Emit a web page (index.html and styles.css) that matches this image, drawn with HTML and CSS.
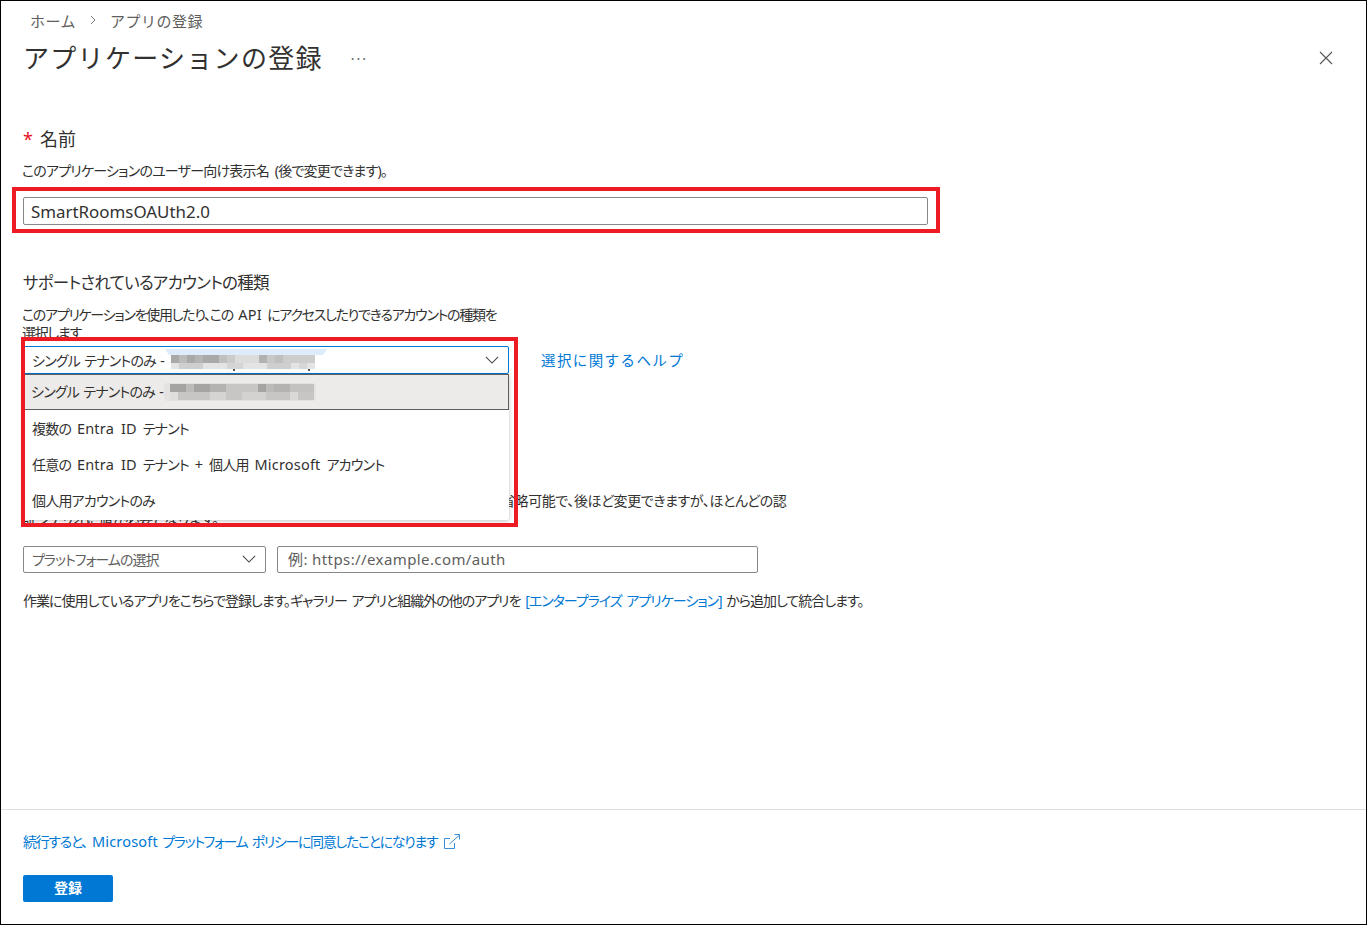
FILE: index.html
```html
<!DOCTYPE html>
<html lang="ja">
<head>
<meta charset="utf-8">
<title>アプリケーションの登録</title>
<link rel="stylesheet" href="styles.css">
</head>
<body>
<div class="page">
  <main class="main">
    <nav class="crumbs"><span>ホーム</span><svg class="crumb-sep" width="6" height="10" viewBox="0 0 6 10"><path d="M1 1l4 4-4 4" fill="none" stroke="#777" stroke-width="1"/></svg><span>アプリの登録</span></nav>
    <header class="head">
      <h1 class="title">アプリケーションの登録</h1>
      <span class="more">···</span>
      <svg class="close" width="14" height="14" viewBox="0 0 14 14"><path d="M1 1l12 12M13 1L1 13" fill="none" stroke="#555" stroke-width="1.1"/></svg>
    </header>
    <section class="name-sec">
      <h2 class="label"><span class="req">*</span>名前</h2>
      <p class="desc desc-shift">このアプリケーションのユーザー向け表示名 (後で変更できます)。</p>
      <div class="name-input">SmartRoomsOAUth2.0</div>
    </section>
    <section class="acct-sec">
      <h2 class="label2">サポートされているアカウントの種類</h2>
      <p class="desc desc-shift narrow">このアプリケーションを使用したり、この <span class="lat">API</span> にアクセスしたりできるアカウントの種類を選択します</p>
      <div class="acct-row">
        <div class="select focus"><span>シングル テナントのみ -</span>
          <svg class="chev" width="14" height="8" viewBox="0 0 16 9"><path d="M1 1l7 7 7-7" fill="none" stroke="#444" stroke-width="1.2"/></svg>
        </div>
        <a class="link help">選択に関するヘルプ</a>
      </div>
    </section>
    <section class="redir-sec">
      <p class="desc redir-text">ユーザー認証が成功すると、この <span class="lat">URI</span> に認証応答を返します。この時点での指定は省略可能で、後ほど変更できますが、ほとんどの認証シナリオに値が必要となります。</p>
      <div class="redir-row">
        <div class="select plat"><span>プラットフォームの選択</span>
          <svg class="chev" width="14" height="8" viewBox="0 0 16 9"><path d="M1 1l7 7 7-7" fill="none" stroke="#444" stroke-width="1.2"/></svg>
        </div>
        <div class="uri">例: https://example.com/auth</div>
      </div>
      <p class="desc note">作業に使用しているアプリをこちらで登録します。ギャラリー アプリと組織外の他のアプリを <a class="link">[エンタープライズ アプリケーション]</a> から追加して統合します。</p>
    </section>
  </main>
  <footer class="foot">
    <p class="policy"><a class="link">続行すると、<span class="lat policy-ms">Microsoft</span> プラットフォーム ポリシーに同意したことになります</a>
      <svg class="ext" width="16" height="15" viewBox="0 0 16 15"><path d="M6 4.500H.5v10h10V9M5.500 10l10-9M10.500.500h5v5" fill="none" stroke="#3a8fd8" stroke-width="1"/></svg></p>
    <button class="btn">登録</button>
  </footer>

  <svg class="blur blur-top" width="162" height="24" viewBox="0 0 162 24">
    <path d="M0 0H162L158 6H4Z" fill="#dcecfa"/>
    <rect x="6" y="6" width="144" height="8" fill="#a9a9a9"/>
    <rect x="14" y="6" width="8" height="8" fill="#bcbcbc"/><rect x="30" y="6" width="8" height="8" fill="#b4b4b4"/>
    <rect x="54" y="6" width="8" height="8" fill="#c0c0c0"/><rect x="62" y="6" width="8" height="8" fill="#cbcbcb"/>
    <rect x="70" y="6" width="24" height="8" fill="#dcdcdc"/><rect x="94" y="6" width="8" height="8" fill="#b2b2b2"/>
    <rect x="102" y="6" width="8" height="8" fill="#c8c8c8"/><rect x="110" y="6" width="8" height="8" fill="#bfbfbf"/>
    <rect x="118" y="6" width="32" height="8" fill="#cdcdcd"/>
    <rect x="6" y="14" width="144" height="6" fill="#e4e4e4"/>
    <rect x="14" y="14" width="24" height="6" fill="#cfcfcf"/><rect x="62" y="14" width="16" height="6" fill="#d5d5d5"/>
    <rect x="102" y="14" width="24" height="6" fill="#cfcfcf"/><rect x="134" y="14" width="8" height="6" fill="#d6d6d6"/>
    <rect x="68" y="20" width="2" height="2" fill="#555"/><rect x="143" y="20" width="2" height="2" fill="#555"/>
  </svg>

  <div class="menu">
    <div class="opt sel"><span>シングル テナントのみ -</span>
      <svg class="blur-sel" width="152" height="18" viewBox="0 0 152 18">
        <rect x="0" y="0" width="152" height="18" rx="4" fill="#e4e2e0"/>
        <rect x="6" y="1" width="144" height="8" fill="#a6a4a3"/>
        <rect x="22" y="1" width="8" height="8" fill="#bdbbb9"/><rect x="46" y="1" width="24" height="8" fill="#b5b3b2"/>
        <rect x="62" y="1" width="32" height="8" fill="#c8c6c4"/><rect x="102" y="1" width="8" height="8" fill="#bdbbb9"/>
        <rect x="110" y="1" width="24" height="8" fill="#b5b3b2"/><rect x="126" y="1" width="24" height="8" fill="#c4c2c0"/>
        <rect x="6" y="9" width="144" height="8" fill="#c8c6c4"/>
        <rect x="6" y="9" width="8" height="8" fill="#e0dedc"/><rect x="46" y="9" width="16" height="8" fill="#d6d4d2"/>
        <rect x="78" y="9" width="24" height="8" fill="#d4d2d0"/><rect x="126" y="9" width="8" height="8" fill="#dad8d6"/>
      </svg>
    </div>
    <div class="opt">複数の <span class="lat">Entra ID</span> テナント</div>
    <div class="opt">任意の <span class="lat">Entra ID</span> テナント <span class="lat">+</span> 個人用 <span class="lat">Microsoft</span> アカウント</div>
    <div class="opt">個人用アカウントのみ</div>
  </div>

  <div class="mark mark-name"></div>
  <div class="mark mark-acct"></div>
</div>
</body>
</html>
```
FILE: styles.css
```css
* { box-sizing: border-box; }
html, body { margin: 0; padding: 0; background: #fff; }
body {
  font-family: "Noto Sans", "Noto Sans CJK JP", sans-serif;
  color: #323130;
  font-size: 14px;
}
.page {
  position: relative;
  width: 1367px;
  height: 925px;
  border: 1px solid #000;
  display: flex;
  flex-direction: column;
  overflow: hidden;
}
p, h1, h2 { margin: 0; font-weight: 400; }
.main { flex: 1; padding: 0 22px; min-height: 0; }
.lat { font-size: 14.500px; letter-spacing: .2px; }

.crumbs {
  display: flex;
  align-items: center;
  gap: 14px;
  height: 20px;
  margin: 9px 0 0 7px;
  font-size: 15px;
  color: #605e5c;
  letter-spacing: .5px;
}
.head { display: flex; align-items: center; height: 44px; margin-top: 6px; }
.title { font-size: 26px; color: #323130; letter-spacing: 1.300px; line-height: 36px; }
.more { margin-left: 28px; color: #605e5c; font-size: 14px; letter-spacing: 2px; }
.close { margin-left: auto; margin-right: 11px; }

.name-sec { margin-top: 46px; }
.label { font-size: 18px; height: 26px; line-height: 26px; display: flex; }
.req { color: #e81123; margin-right: 8px; width: 9px; }
.desc { font-size: 14px; line-height: 18px; font-feature-settings: "palt"; letter-spacing: -.8px; word-spacing: 3px; }
.desc-shift { margin-left: -1px; }
.name-sec .desc { margin-top: 10px; }
.name-input {
  width: 905px;
  height: 28px;
  margin-top: 17px;
  border: 1px solid #8a8886;
  border-radius: 2px;
  font-size: 16.900px;
  line-height: 28px;
  padding-left: 7px;
}

.acct-sec { margin-top: 45px; }
.label2 { font-size: 16.500px; line-height: 26px; font-feature-settings: "palt"; letter-spacing: -.75px; }
.narrow { width: 482px; margin-top: 9px; height: 41px; letter-spacing: -1.280px; }
.acct-row { display: flex; align-items: center; gap: 32px; }
.select {
  position: relative;
  display: flex;
  align-items: center;
  justify-content: space-between;
  height: 28px;
  border: 1px solid #8a8886;
  border-radius: 2px;
  padding: 0 9px 0 8px;
  font-size: 14px;
  font-feature-settings: "palt";
  letter-spacing: -.8px;
  word-spacing: 1.500px;
  background: #fff;
}
.focus { width: 486px; border-color: #0078d4; }
.link { color: #0078d4; text-decoration: none; }
.help { font-size: 14.500px; letter-spacing: 1.400px; margin-bottom: 2px; }

.redir-sec { margin-top: 117px; }
.redir-text { width: 770px; height: 36px; letter-spacing: -.42px; word-spacing: 3px; }
.redir-row { display: flex; gap: 11px; margin-top: 19px; }
.plat { width: 243px; height: 27px; padding-bottom: 1px; color: #605e5c; letter-spacing: -1px; }
.uri {
  width: 481px;
  height: 27px;
  border: 1px solid #8a8886;
  border-radius: 2px;
  padding-left: 10px;
  line-height: 25px;
  color: #605e5c;
  font-size: 15px;
  letter-spacing: .4px;
}
.note { margin-top: 19px; letter-spacing: -1px; word-spacing: 2px; }

.foot {
  height: 115px;
  border-top: 1px solid #e1dfdd;
  padding: 21px 22px 0;
  flex: none;
}
.policy { display: flex; align-items: center; gap: 7px; height: 20px; font-size: 14px; font-feature-settings: "palt"; letter-spacing: -1.350px; word-spacing: 2px; }
.policy-ms { margin-left: 5px; }
.ext { flex: none; }
.btn {
  display: block;
  margin-top: 24px;
  width: 90px;
  height: 27px;
  padding: 0 0 3px;
  border: 0;
  border-radius: 2px;
  background: #0078d4;
  color: #fff;
  font: 600 14px "Noto Sans CJK JP", sans-serif;
}

.blur { position: absolute; left: 164px; top: 348px; }

.menu {
  position: absolute;
  left: 22px;
  top: 373px;
  width: 486px;
  height: 146px;
  background: #fff;
  box-shadow: 0 1px 4px rgba(0,0,0,.25);
  border-radius: 0 0 2px 2px;
  font-feature-settings: "palt";
  font-size: 14px;
  letter-spacing: -.8px;
  word-spacing: 3px;
}
.opt { height: 36px; line-height: 37px; padding-left: 9px; }
.sel {
  position: relative;
  height: 36px;
  background: #edebe9;
  border: 1px solid #605e5c;
  padding-left: 7px;
  line-height: 34px;
  word-spacing: 1.500px;
}
.blur-sel { position: absolute; left: 140px; top: 8px; }

.mark { position: absolute; border: 4px solid #ed1c24; pointer-events: none; }
.mark-name { left: 11px; top: 186px; width: 928px; height: 46px; }
.mark-acct { left: 20px; top: 336px; width: 497px; height: 190px; }
```
